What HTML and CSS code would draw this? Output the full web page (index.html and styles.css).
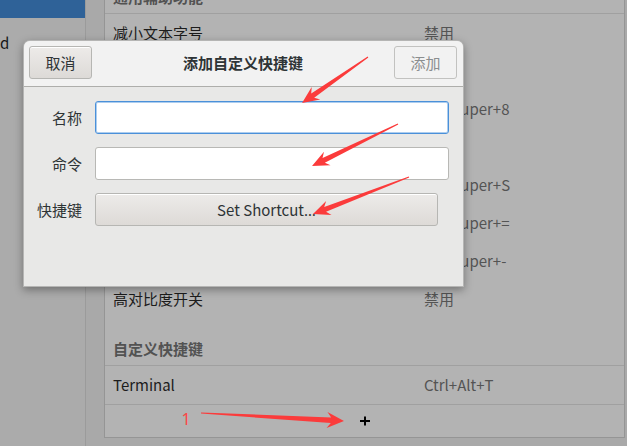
FILE: index.html
```html
<!DOCTYPE html>
<html lang="zh-CN">
<head>
<meta charset="utf-8">
<title>添加自定义快捷键</title>
<link rel="stylesheet" href="styles.css">
</head>
<body>
<div class="window">
  <aside class="sidebar">
    <div class="side-item selected"></div>
    <div class="side-item">d</div>
  </aside>
  <main class="content">
    <div class="frame">
      <div class="section-head">通用辅助功能</div>
      <div class="row"><span class="name">减小文本字号</span><span class="accel">禁用</span></div>
      <div class="row"><span class="name">增大文本字号</span><span class="accel">禁用</span></div>
      <div class="row"><span class="name">开启或关闭缩放</span><span class="accel">Alt+Super+8</span></div>
      <div class="row"><span class="name">开启或关闭屏幕键盘</span><span class="accel">禁用</span></div>
      <div class="row"><span class="name">开启或关闭屏幕阅读器</span><span class="accel">Alt+Super+S</span></div>
      <div class="row"><span class="name">放大</span><span class="accel">Alt+Super+=</span></div>
      <div class="row"><span class="name">缩小</span><span class="accel">Alt+Super+-</span></div>
      <div class="row"><span class="name">高对比度开关</span><span class="accel">禁用</span></div>
      <div class="section-head">自定义快捷键</div>
      <div class="row custom"><span class="name">Terminal</span><span class="accel">Ctrl+Alt+T</span></div>
      <div class="add-row">
        <svg class="plus" width="10" height="10" viewBox="0 0 10 10"><path d="M0 5H10M5 0.5V9.5" stroke="#000" stroke-width="2"/></svg>
      </div>
    </div>
  </main>

  <div class="dialog">
    <div class="dialog-header">
      <button class="btn">取消</button>
      <div class="dialog-title">添加自定义快捷键</div>
      <button class="btn disabled">添加</button>
    </div>
    <div class="dialog-body">
      <label class="field-label">名称</label>
      <div class="entry focused"></div>
      <label class="field-label">命令</label>
      <div class="entry"></div>
      <label class="field-label">快捷键</label>
      <button class="btn shortcut">Set Shortcut<span class="ellipsis">…</span></button>
    </div>
  </div>

  <svg class="annotations" width="627" height="446" viewBox="0 0 627 446">
    <g fill="#fb3b3b">
      <polygon transform="translate(368 57) rotate(145.12)" points="0,-0.6 67.4,-2.6 63.4,-7.5 80.4,0 63.4,7.5 67.4,2.6 0,0.6"/>
      <polygon transform="translate(398 124) rotate(153.97)" points="0,-0.6 82.7,-2.6 78.7,-7.5 95.7,0 78.7,7.5 82.7,2.6 0,0.6"/>
      <polygon transform="translate(409 177) rotate(158.92)" points="0,-0.6 89.9,-2.6 85.9,-7.5 102.9,0 85.9,7.5 89.9,2.6 0,0.6"/>
      <polygon transform="translate(201 413) rotate(3.2)" points="0,-0.6 130.2,-2.8 126.2,-8 143.2,0 126.2,8 130.2,2.8 0,0.6"/>
    </g>
    <text class="note" x="181.5" y="424.5">1</text>
  </svg>
</div>
</body>
</html>
```
FILE: styles.css
```css
* { box-sizing: border-box; }
html, body {
  margin: 0;
  padding: 0;
  width: 627px;
  height: 446px;
  overflow: hidden;
}
body {
  font-family: "Noto Sans CJK SC", "Noto Sans", sans-serif;
  font-size: 15px;
  line-height: 20px;
  color: #1c1c1c;
  background: #a9a9a9;
}
.window {
  position: relative;
  width: 627px;
  height: 446px;
  display: flex;
  overflow: hidden;
}

/* sidebar */
.sidebar {
  width: 86px;
  flex: none;
  background: #ababab;
  border-right: 1px solid #9b9b9b;
}
.side-item.selected {
  height: 18px;
  background: #2f6298;
}
.side-item {
  height: 50px;
  display: flex;
  align-items: center;
  color: #161616;
}

/* main list */
.content {
  flex: 1;
  padding: 0 2px 0 18px;
  background: #a9a9a9;
}
.frame {
  margin-top: -35px;
  background: #b3b3b3;
  border: 1px solid #959595;
}
.section-head {
  height: 48px;
  padding: 21px 0 0 8px;
  font-weight: bold;
  color: #525252;
  border-bottom: 1px solid #a0a0a0;
}
.row {
  height: 38px;
  display: grid;
  grid-template-columns: 311px 1fr;
  align-items: center;
  padding-left: 8px;
}
.row.custom {
  height: 39px;
  border-bottom: 1px solid #a0a0a0;
}
.accel { color: #545454; }
.add-row {
  height: 32px;
  display: flex;
  align-items: center;
  justify-content: center;
}
.plus { display: block; }

/* dialog */
.dialog {
  position: absolute;
  left: 23px;
  top: 40px;
  width: 441px;
  height: 247px;
  background: #e8e8e7;
  border: 1px solid rgba(0, 0, 0, 0.22);
  border-radius: 7px 7px 0 0;
  box-shadow: 0 3px 9px rgba(0, 0, 0, 0.35);
  display: flex;
  flex-direction: column;
  color: #2e3436;
}
.dialog-header {
  height: 46px;
  flex: none;
  display: flex;
  align-items: flex-start;
  padding: 5px 6px 0 5px;
  background: #f2f2f2;
  border-bottom: 1px solid #aeaeab;
  border-radius: 6px 6px 0 0;
}
.dialog-title {
  flex: 1;
  text-align: center;
  font-weight: bold;
  line-height: 33px;
  color: #2e3436;
}
.btn {
  font-family: inherit;
  font-size: 15px;
  color: #2e3436;
  height: 33px;
  width: 63px;
  padding: 0;
  border: 1px solid #b6b6b3;
  border-radius: 3px;
  background: linear-gradient(#edebe9, #dddad7);
  box-shadow: inset 0 1px #fff;
}
.btn.disabled {
  color: #8b8e8f;
  background: #f2f2f2;
  border-color: #c2c2c0;
  box-shadow: none;
}
.ellipsis {
  font-family: "Noto Sans", sans-serif;
}
.dialog-body {
  display: grid;
  grid-template-columns: auto 1fr;
  column-gap: 13px;
  row-gap: 13px;
  padding: 14px 14px 0 13px;
  align-items: center;
}
.field-label {
  text-align: right;
  color: #2e3436;
}
.entry {
  height: 33px;
  background: #fff;
  border: 1px solid #b8b8b5;
  border-radius: 3px;
}
.entry.focused {
  border-color: #4a90d9;
  box-shadow: inset 0 0 0 1px rgba(74, 144, 217, 0.45);
}
.btn.shortcut {
  width: calc(100% - 11px);
  justify-self: start;
}

/* annotations */
.annotations {
  position: absolute;
  left: 0;
  top: 0;
  pointer-events: none;
}
.note {
  font-family: "Noto Sans", sans-serif;
  font-size: 16px;
  fill: #fb4646;
}
```
